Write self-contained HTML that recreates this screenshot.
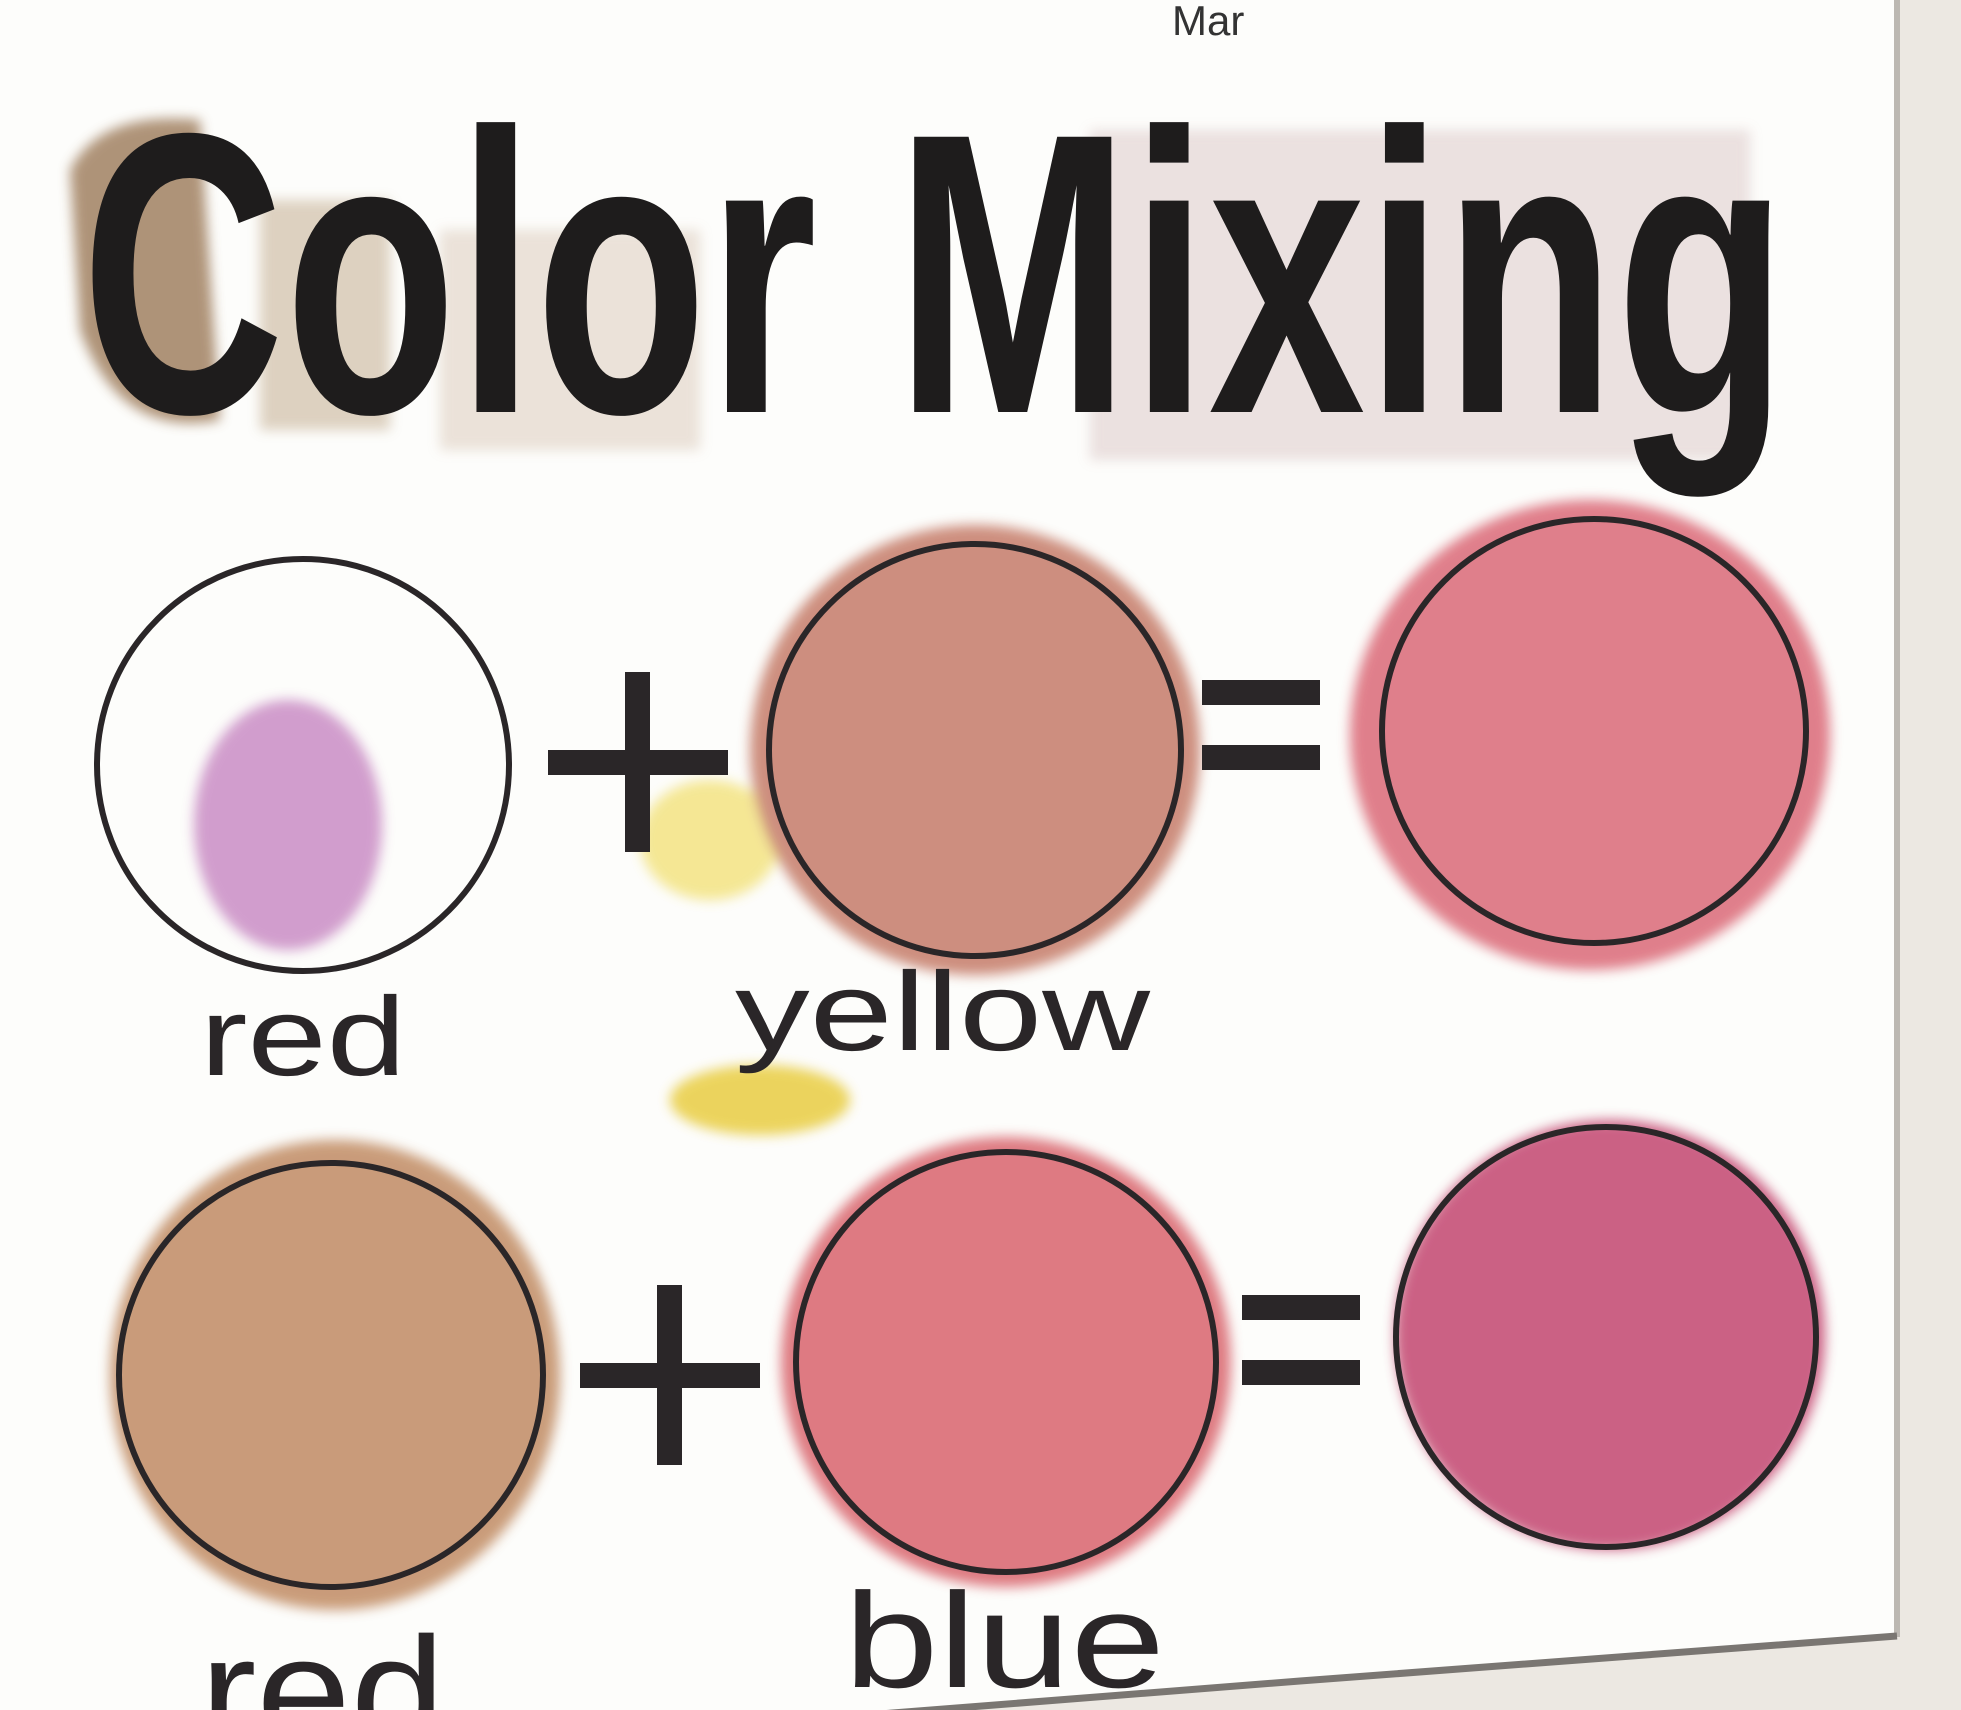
<!DOCTYPE html>
<html><head><meta charset="utf-8"><style>
html,body{margin:0;padding:0;background:#ece8e2;overflow:hidden;}
svg{display:block}
</style></head><body>
<svg width="1961" height="1710" viewBox="0 0 1961 1710" xmlns="http://www.w3.org/2000/svg">
<defs>
<filter id="b" x="-20%" y="-20%" width="140%" height="140%"><feGaussianBlur stdDeviation="6"/></filter>
</defs>
<rect width="1961" height="1710" fill="#ece8e2"/>
<polygon points="0,0 1895,0 1895,1635 1300,1680 900,1712 0,1712" fill="#fdfdfb"/>
<line x1="1897" y1="0" x2="1897" y2="1637" stroke="#bcb8b2" stroke-width="6"/>
<polyline points="1897,1636 1300,1681 880,1714" fill="none" stroke="#7a7672" stroke-width="7"/>
<g filter="url(#b)" opacity="0.85">
<path d="M70 170 Q100 110 200 120 L220 420 Q120 440 80 330 Z" fill="#a08060"/>
<rect x="260" y="200" width="130" height="230" fill="#c8b498" opacity="0.7"/>
<rect x="440" y="230" width="260" height="220" fill="#d8c8b8" opacity="0.6"/>
<rect x="1090" y="130" width="660" height="330" fill="#d8c4c4" opacity="0.6"/>
<ellipse cx="710" cy="840" rx="70" ry="60" fill="#f0d850" opacity="0.7"/>
<ellipse cx="760" cy="1100" rx="90" ry="35" fill="#e8cc40"/>
<ellipse cx="288" cy="825" rx="94" ry="125" fill="#c98cc4"/>
<ellipse cx="975" cy="750" rx="225" ry="225" fill="#c47a68"/>
<ellipse cx="1590" cy="735" rx="240" ry="235" fill="#da6876"/>
<ellipse cx="335" cy="1375" rx="225" ry="235" fill="#c08a62"/>
<ellipse cx="1006" cy="1362" rx="225" ry="225" fill="#d8646c"/>
<ellipse cx="1610" cy="1335" rx="215" ry="215" fill="#c2456e"/>
</g>
<g fill="none" stroke="#2a2628" stroke-width="6">
<circle cx="303" cy="765" r="206"/>
<circle cx="975" cy="750" r="206"/>
<circle cx="1594" cy="731" r="212"/>
<circle cx="331" cy="1375" r="212"/>
<circle cx="1006" cy="1362" r="210"/>
<circle cx="1606" cy="1337" r="210"/>
</g>
<g fill="#2a2628">
<rect x="548" y="750" width="180" height="25"/><rect x="625" y="672" width="25" height="180"/>
<rect x="1202" y="680" width="118" height="25"/><rect x="1202" y="745" width="118" height="25"/>
<rect x="580" y="1363" width="180" height="25"/><rect x="657" y="1285" width="25" height="180"/>
<rect x="1242" y="1295" width="118" height="25"/><rect x="1242" y="1360" width="118" height="25"/>
</g>
<text x="81" y="412" font-family="Liberation Sans, sans-serif" font-weight="bold" font-size="400" fill="#1e1c1c" textLength="1707" lengthAdjust="spacingAndGlyphs">Color Mixing</text>
<text x="1172" y="35" font-family="Liberation Sans, sans-serif" font-size="42" fill="#333">Mar</text>
<g font-family="Liberation Sans, sans-serif" fill="#2a2628">
<text x="200" y="1075" font-size="112" textLength="206" lengthAdjust="spacingAndGlyphs">red</text>
<text x="735" y="1050" font-size="112" textLength="415" lengthAdjust="spacingAndGlyphs">yellow</text>
<text x="200" y="1745" font-size="155" textLength="245" lengthAdjust="spacingAndGlyphs">red</text>
<text x="844" y="1687" font-size="135" textLength="321" lengthAdjust="spacingAndGlyphs">blue</text>
</g>
</svg>
</body></html>
